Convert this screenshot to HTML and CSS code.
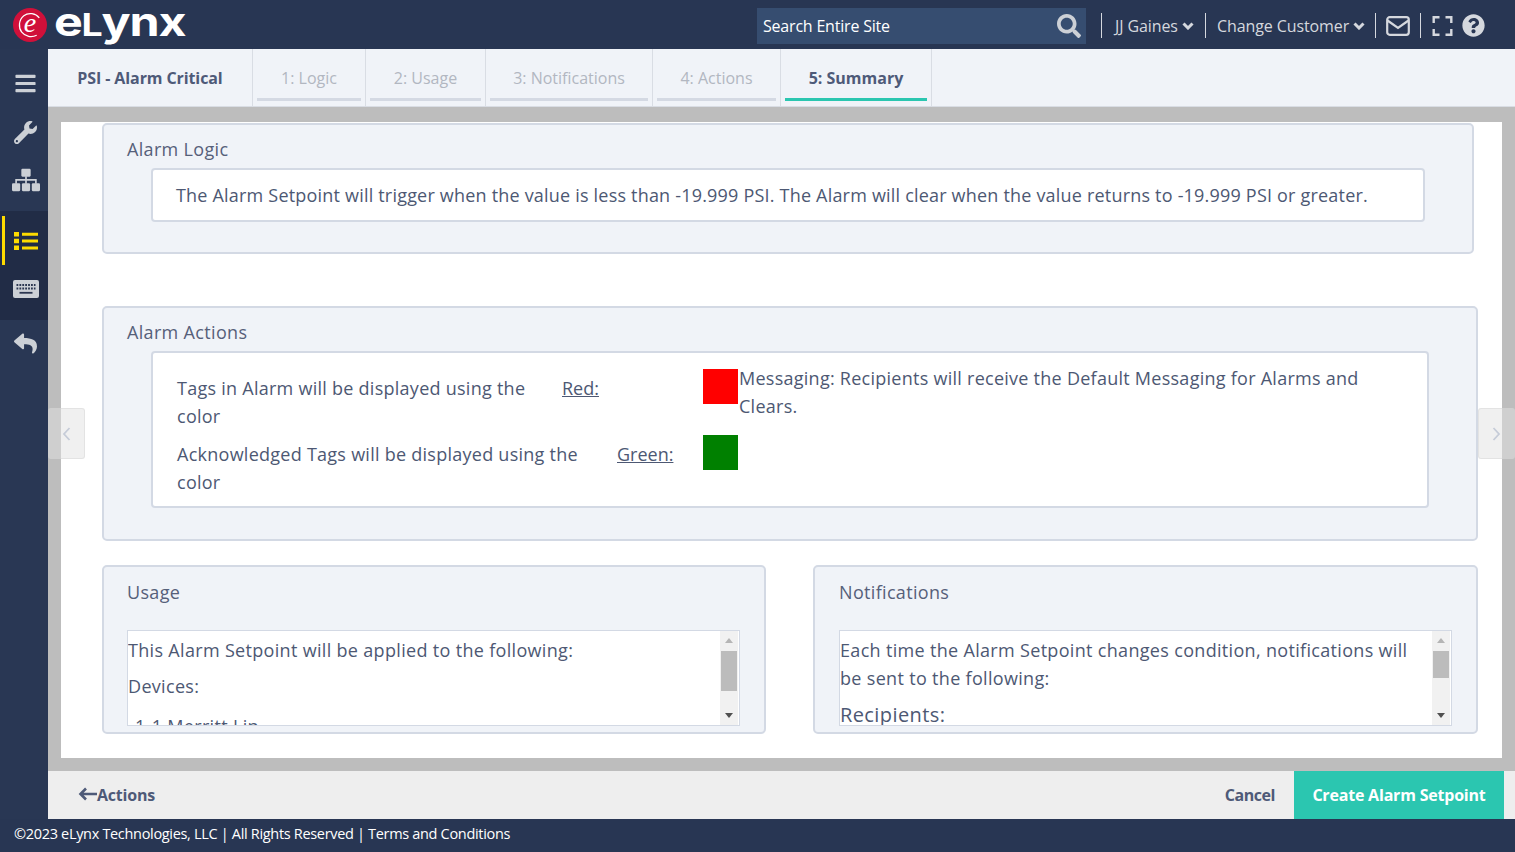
FILE: index.html
```html
<!DOCTYPE html>
<html lang="en">
<head>
<meta charset="utf-8">
<title>eLynx - Alarm Setpoint Summary</title>
<link rel="stylesheet" href="styles.css">
</head>
<body>
<div class="app">
  <header class="topbar">
    <div class="brand">
      <span class="brand-mark">
        <svg class="brand-ring" viewBox="0 0 33 33"><path d="M25.500 9.500C22 5 15 4 10.500 7.500 5.500 11.500 5 19 8.500 23.500 12 28 18 29 23 26.500" fill="none" stroke="#fff" stroke-width="1.200"/></svg>
        <span class="brand-e">e</span>
      </span>
      <span class="brand-name">e<span class="brand-l">L</span>ynx</span>
    </div>
    <div class="top-right">
      <div class="search">
        <span>Search Entire Site</span>
        <svg class="ico-search" viewBox="0 0 512 512"><path d="M505 442.7L405.3 343c-4.5-4.5-10.6-7-17-7H372c27.6-35.3 44-79.7 44-128C416 93.1 322.9 0 208 0S0 93.1 0 208s93.1 208 208 208c48.3 0 92.7-16.4 128-44v16.3c0 6.4 2.5 12.5 7 17l99.7 99.7c9.4 9.4 24.6 9.4 33.9 0l28.3-28.3c9.4-9.4 9.4-24.6.1-34zM208 336c-70.7 0-128-57.2-128-128 0-70.7 57.2-128 128-128 70.7 0 128 57.2 128 128 0 70.7-57.2 128-128 128z"/></svg>
      </div>
      <div class="top-item user">JJ Gaines
        <svg class="ico-chev" viewBox="0 0 12 8"><path d="M1.500 1.500 6 6l4.500-4.500" fill="none" stroke="currentColor" stroke-width="3"/></svg>
      </div>
      <div class="top-item customer">Change Customer
        <svg class="ico-chev" viewBox="0 0 12 8"><path d="M1.500 1.500 6 6l4.500-4.500" fill="none" stroke="currentColor" stroke-width="3"/></svg>
      </div>
      <div class="top-item mail">
        <svg class="ico-mail" viewBox="0 0 24 20"><rect x="1.200" y="1.200" width="21.600" height="17.600" rx="2.500" fill="none" stroke="currentColor" stroke-width="2.200"/><path d="M1.500 4.500 12 12l10.500-7.500" fill="none" stroke="currentColor" stroke-width="2.200"/></svg>
      </div>
      <div class="top-item tools">
        <svg class="ico-expand" viewBox="0 0 20 20"><path d="M1.200 7V1.200H7M13 1.200h5.800V7M18.800 13v5.800H13M7 18.800H1.200V13" fill="none" stroke="currentColor" stroke-width="2.400"/></svg>
        <svg class="ico-help" viewBox="0 0 512 512"><path d="M504 256c0 136.997-111.043 248-248 248S8 392.997 8 256C8 119.083 119.043 8 256 8s248 111.083 248 248zM262.655 90c-54.497 0-89.255 22.957-116.549 63.758-3.536 5.286-2.353 12.415 2.715 16.258l34.699 26.31c5.205 3.947 12.621 3.008 16.665-2.122 17.864-22.658 30.113-35.797 57.303-35.797 20.429 0 45.698 13.148 45.698 32.958 0 14.976-12.363 22.667-32.534 33.976C247.128 238.528 216 254.941 216 296v4c0 6.627 5.373 12 12 12h56c6.627 0 12-5.373 12-12v-1.333c0-28.462 83.186-29.647 83.186-106.667 0-58.002-60.165-102-116.531-102zM256 338c-25.365 0-46 20.635-46 46 0 25.364 20.635 46 46 46s46-20.636 46-46c0-25.365-20.635-46-46-46z"/></svg>
      </div>
    </div>
  </header>

  <nav class="sidebar">
    <div class="side-item side-first"><svg class="ico-side" viewBox="0 0 448 512"><path d="M16 132h416c8.837 0 16-7.163 16-16V76c0-8.837-7.163-16-16-16H16C7.163 60 0 67.163 0 76v40c0 8.837 7.163 16 16 16zm0 160h416c8.837 0 16-7.163 16-16v-40c0-8.837-7.163-16-16-16H16c-8.837 0-16 7.163-16 16v40c0 8.837 7.163 16 16 16zm0 160h416c8.837 0 16-7.163 16-16v-40c0-8.837-7.163-16-16-16H16c-8.837 0-16 7.163-16 16v40c0 8.837 7.163 16 16 16z"/></svg></div>
    <div class="side-item"><svg class="ico-side" viewBox="0 0 512 512"><path d="M507.73 109.1c-2.24-9.03-13.54-12.09-20.12-5.51l-74.36 74.36-67.88-11.31-11.31-67.88 74.36-74.36c6.62-6.62 3.43-17.9-5.66-20.16-47.38-11.74-99.55.91-136.58 37.93-39.64 39.64-50.55 97.1-34.05 147.2L18.74 402.76c-24.99 24.99-24.99 65.51 0 90.5 24.99 24.99 65.51 24.99 90.5 0l213.21-213.21c50.12 16.71 107.47 5.68 147.37-34.22 37.07-37.07 49.7-89.32 37.91-136.73zM64 472c-13.25 0-24-10.75-24-24 0-13.26 10.75-24 24-24s24 10.74 24 24c0 13.25-10.75 24-24 24z"/></svg></div>
    <div class="side-item"><svg class="ico-sitemap" viewBox="0 0 30 24"><rect x="10" y="0" width="10" height="8.500" rx="1.200"/><rect x="0" y="15.500" width="8.800" height="8.500" rx="1.200"/><rect x="10.600" y="15.500" width="8.800" height="8.500" rx="1.200"/><rect x="21.200" y="15.500" width="8.800" height="8.500" rx="1.200"/><path d="M15 8v8M4.400 16v-4.200h21.200V16" fill="none" stroke="currentColor" stroke-width="1.800"/></svg></div>
    <div class="side-group">
      <div class="side-item side-active"><svg class="ico-list" viewBox="0 0 24 20"><path d="M0 1h5v4.500H0zM0 7.800h5v4.500H0zM0 14.600h5v4.500H0zM8 1.800h16v3H8zM8 8.600h16v3H8zM8 15.400h16v3H8z"/></svg></div>
      <div class="side-item"><svg class="ico-keys" viewBox="0 0 26 18"><rect x="0" y="0" width="26" height="18" rx="2" fill="currentColor"/><path d="M3.500 5h19M3.500 8.500h19" fill="none" stroke="#2b3650" stroke-width="1.800" stroke-dasharray="1.800 1.100"/><path d="M6.500 12.800h13" fill="none" stroke="#2b3650" stroke-width="1.800"/></svg></div>
    </div>
    <div class="side-item"><svg class="ico-side" viewBox="0 0 512 512"><path d="M8.309 189.836L184.313 37.851C199.719 24.546 224 35.347 224 56.015v80.053c160.629 1.839 288 34.032 288 186.258 0 61.441-39.581 122.309-83.333 154.132-13.653 9.931-33.111-2.533-28.077-18.631 45.344-145.012-21.507-183.51-176.59-185.742V360c0 20.700-24.300 31.453-39.687 18.164l-176.004-152c-11.071-9.562-11.086-26.753 0-36.328z"/></svg></div>
  </nav>

  <main class="main">
    <div class="tabs">
      <div class="tab-title">PSI - Alarm Critical</div>
      <div class="tab tab-1"><span class="tab-label">1: Logic</span></div>
      <div class="tab tab-2"><span class="tab-label">2: Usage</span></div>
      <div class="tab tab-3"><span class="tab-label">3: Notifications</span></div>
      <div class="tab tab-4"><span class="tab-label">4: Actions</span></div>
      <div class="tab tab-5 tab-on"><span class="tab-label">5: Summary</span></div>
    </div>

    <div class="stage">
      <div class="sheet">
        <section class="card card-logic">
          <h2 class="card-title">Alarm Logic</h2>
          <div class="inner inner-logic">The Alarm Setpoint will trigger when the value is less than -19.999 PSI. The Alarm will clear when the value returns to -19.999 PSI or greater.</div>
        </section>

        <section class="card card-actions">
          <h2 class="card-title">Alarm Actions</h2>
          <div class="inner inner-actions">
            <div class="colors">
              <div class="color-row">
                <div class="color-label label-red">Tags in Alarm will be displayed using the color</div>
                <a class="color-name">Red:</a>
                <span class="swatch swatch-red"></span>
              </div>
              <div class="color-row">
                <div class="color-label label-green">Acknowledged Tags will be displayed using the color</div>
                <a class="color-name">Green:</a>
                <span class="swatch swatch-green"></span>
              </div>
            </div>
            <div class="messaging">Messaging: Recipients will receive the Default Messaging for Alarms and Clears.</div>
          </div>
        </section>

        <div class="card-row">
          <section class="card card-half">
            <h2 class="card-title">Usage</h2>
            <div class="scrollbox">
              <div class="scroll-text">
                <p>This Alarm Setpoint will be applied to the following:</p>
                <p>Devices:</p>
                <p class="line-device">1-1 Merritt Lin</p>
              </div>
              <div class="scroll-track">
                <span class="arrow-up"></span>
                <span class="thumb thumb-long"></span>
                <span class="arrow-down"></span>
              </div>
            </div>
          </section>
          <section class="card card-half card-notify">
            <h2 class="card-title">Notifications</h2>
            <div class="scrollbox">
              <div class="scroll-text">
                <p>Each time the Alarm Setpoint changes condition, notifications will be sent to the following:</p>
                <p class="line-big">Recipients:</p>
              </div>
              <div class="scroll-track">
                <span class="arrow-up"></span>
                <span class="thumb thumb-short"></span>
                <span class="arrow-down"></span>
              </div>
            </div>
          </section>
        </div>
      </div>
    </div>

    <div class="actionbar">
      <a class="back"><svg class="ico-back" viewBox="0 0 20 14"><path d="M19 7H3M8 1.500 2.500 7 8 12.500" fill="none" stroke="currentColor" stroke-width="2.600"/></svg>Actions</a>
      <a class="cancel">Cancel</a>
      <a class="create">Create Alarm Setpoint</a>
    </div>

    <div class="pager pager-left"><svg class="ico-pager" viewBox="0 0 8 14"><path d="M7 1 1.500 7 7 13" fill="none" stroke="currentColor" stroke-width="1.800"/></svg></div>
    <div class="pager pager-right"><svg class="ico-pager" viewBox="0 0 8 14"><path d="M1 1l5.500 6L1 13" fill="none" stroke="currentColor" stroke-width="1.800"/></svg></div>
  </main>

  <footer class="footer">©2023 eLynx Technologies, LLC | All Rights Reserved | Terms and Conditions</footer>
</div>
</body>
</html>
```
FILE: styles.css
```css
* { box-sizing: border-box; }
html, body { margin: 0; height: 100%; overflow: hidden; }
body { font-family: "Open Sans", "Liberation Sans", sans-serif; color: #4d5873; background: #fff; }

.app {
  width: 1515px; height: 852px;
  display: grid;
  grid-template-columns: 48px 1fr;
  grid-template-rows: 49px 770px 33px;
}

/* top bar */
.topbar {
  grid-column: 1 / 3;
  background: #283653;
  display: flex; align-items: center; justify-content: space-between;
  color: #d5d8de;
}
.brand { display: flex; align-items: center; padding-left: 13px; }
.brand-mark {
  position: relative;
  width: 34px; height: 34px; border-radius: 50%;
  background: #d0103a;
  display: flex; align-items: center; justify-content: center;
  margin-right: 7px;
}
.brand-ring { position: absolute; inset: 0; width: 34px; height: 34px; }
.brand-e { font: italic 400 28px/28px "Liberation Serif", serif; color: #fff; margin-top: -4px; }
.brand-name {
  display: inline-block;
  font: 700 40px/44px "Inter", "Liberation Sans", sans-serif;
  color: #fff; letter-spacing: -1px;
  margin-top: -3px;
  transform: scaleX(1.21);
  transform-origin: left center;
}
.brand-l { font-size: 31px; }
.top-right { display: flex; align-items: center; height: 100%; padding-top: 2px; }
.search {
  width: 329px; height: 36px;
  background: #364d70; color: #fff;
  display: flex; align-items: center; justify-content: space-between;
  padding: 0 5px 0 6px;
  font-size: 16px; letter-spacing: -0.2px;
}
.ico-search { width: 24px; height: 24px; fill: #ccd0d6; }
.top-item {
  height: 25px;
  border-left: 1px solid #d5d8de;
  display: flex; align-items: center;
  font-size: 16px; letter-spacing: -0.1px;
  white-space: nowrap;
}
.user { margin-left: 15px; width: 104px; padding-left: 13px; }
.customer { width: 170px; padding-left: 11px; }
.mail { width: 45px; padding-left: 10px; }
.tools { width: 95px; padding-left: 11px; }
.ico-chev { width: 12px; height: 8px; margin-left: 4px; }
.ico-mail { width: 24px; height: 20px; }
.ico-expand { width: 21px; height: 20px; }
.ico-help { width: 23px; height: 23px; margin-left: 9px; fill: currentColor; }

/* sidebar */
.sidebar {
  background: #293754;
  color: #ccd0d6;
  padding-top: 10px;
  display: flex; flex-direction: column;
}
.side-item { height: 48px; display: flex; align-items: center; justify-content: center; padding-left: 3px; }
.side-first { height: 49px; }
.side-group { background: #212c46; padding: 6px 0 7px; margin-top: 7px; margin-bottom: -1px; }
.side-active { position: relative; color: #fedb00; }
.side-active::before { content: ""; position: absolute; left: 2px; top: -1px; bottom: 0; width: 3px; background: #fedb00; }
.ico-side { width: 23px; height: 23px; fill: currentColor; }
.ico-sitemap { width: 28px; height: 24px; fill: currentColor; }
.ico-list { width: 24px; height: 20px; fill: currentColor; }
.ico-keys { width: 26px; height: 18px; }

/* main */
.main { position: relative; display: flex; flex-direction: column; min-width: 0; }
.tabs {
  height: 58px; background: #f0f3f8;
  display: flex;
  border-bottom: 1px solid #d9dde4;
  flex: none;
}
.tab-title {
  width: 205px;
  border-right: 1px solid #d9dde4;
  display: flex; align-items: center; justify-content: center;
  font-size: 16px; font-weight: 700; letter-spacing: -0.1px;
  color: #4e5a78;
}
.tab {
  border-right: 1px solid #d9dde4;
  padding: 0 4px 5px;
  display: flex; align-items: stretch;
  font-size: 16px; font-weight: 400;
  color: #b2b7c1;
}
.tab-label {
  flex: 1;
  display: flex; align-items: center; justify-content: center;
  border-bottom: 3px solid #d4d9e3;
  padding-top: 8px;
}
.tab-1 { width: 113px; }
.tab-2 { width: 120px; }
.tab-3 { width: 167px; }
.tab-4 { width: 128px; }
.tab-5 { width: 151px; }
.tab-on { color: #4e5a78; font-weight: 700; }
.tab-on .tab-label { border-bottom-color: #2bc6b0; }

.stage {
  flex: 1; min-height: 0;
  background: #bdbdbd;
  padding: 15px 13px 13px;
  display: flex;
}
.sheet { flex: 1; background: #fff; padding: 1px 24px 0 41px; min-width: 0; }

.card {
  background: #f0f3f8;
  border: 2px solid #d3d9e4;
  border-radius: 5px;
}
.card-title {
  margin: 0;
  font-size: 18px; font-weight: 400; line-height: 26px; letter-spacing: 0.33px;
  color: #56607a;
}
.card-logic { height: 131px; margin-right: 4px; padding: 11px 47px 0 23px; }
.inner {
  background: #fff;
  border: 2px solid #d3d9e4;
  border-radius: 4px;
  font-size: 18px; line-height: 28px; letter-spacing: 0.26px; color: #4d5873;
}
.inner-logic { margin: 6px 0 0 24px; height: 54px; padding: 11px 0 0 23px; white-space: nowrap; letter-spacing: 0.197px; }
.card-actions { height: 235px; margin-top: 52px; padding: 11px 47px 0 23px; }
.inner-actions { margin: 6px 0 0 24px; height: 157px; padding: 11px 40px 0 24px; display: flex; }
.colors { width: 562px; flex: none; padding: 5px 1px 0 0; }
.color-row { display: flex; align-items: flex-start; height: 66px; }
.color-label { padding: 5px 30px 0 0; }
.label-red { width: 385px; }
.label-green { width: 440px; }
.color-name { padding-top: 5px; text-decoration: underline; letter-spacing: 0; }
.swatch { width: 35px; height: 35px; margin-left: auto; }
.swatch-red { background: #ff0000; }
.swatch-green { background: #008000; }
.messaging { flex: 1; }

.card-row { display: flex; justify-content: space-between; margin-top: 24px; }
.card-half { width: 664px; height: 169px; padding: 12px 24px 0 23px; }
.card-notify { width: 665px; padding-left: 24px; }
.scrollbox {
  margin-top: 25px; height: 96px;
  background: #fff;
  border: 1px solid #d3d9e4;
  display: flex;
}
.scroll-text { flex: 1; overflow: hidden; font-size: 18px; line-height: 28px; letter-spacing: 0.32px; color: #4d5873; padding-top: 5px; min-width: 0; }
.scroll-text p { margin: 0 0 8px; }
.scroll-text .line-device { padding-left: 7px; margin-top: 12px; }
.scroll-text .line-big { font-size: 20px; margin: 9px 0 0; letter-spacing: 0.4px; }
.scroll-track {
  width: 18px; flex: none; background: #f1f1f1; margin-right: 1px;
  display: flex; flex-direction: column; align-items: center;
  padding: 7px 0;
  position: relative;
}
.arrow-up, .arrow-down { width: 0; height: 0; border-left: 4px solid transparent; border-right: 4px solid transparent; }
.arrow-up { border-bottom: 5px solid #b5b5b5; }
.arrow-down { border-top: 5px solid #505050; margin-top: auto; }
.thumb { width: 16px; background: #bcbcbc; margin-top: 8px; }
.thumb-long { height: 40px; }
.thumb-short { height: 27px; }

/* bottom */
.actionbar {
  height: 48px; flex: none;
  background: #eeeeee;
  display: flex; align-items: center;
  padding-left: 30px; padding-right: 11px;
  font-size: 16px; font-weight: 700; letter-spacing: -0.2px;
  color: #4e5a78;
}
.back { display: flex; align-items: center; }
.ico-back { width: 20px; height: 14px; margin-right: -1px; margin-top: -2px; }
.cancel { margin-left: auto; margin-right: 19px; letter-spacing: -0.45px; }
.create {
  width: 210px; height: 48px;
  background: #2bc6b0; color: #fff;
  display: flex; align-items: center; justify-content: center;
}

.pager {
  position: absolute; top: 359px;
  width: 37px; height: 51px;
  background: rgba(225, 225, 225, 0.5);
  border: 1px solid rgba(210, 210, 210, 0.4);
  border-radius: 3px;
  display: flex; align-items: center; justify-content: center;
  color: #c6ccd8;
}
.pager-left { left: 0; }
.pager-right { right: 0; }
.ico-pager { width: 9px; height: 14px; }

.footer {
  grid-column: 1 / 3;
  background: #283653; color: #fff;
  font-size: 14.5px; letter-spacing: -0.32px;
  padding: 5px 0 0 14px;
  white-space: nowrap;
}
```
